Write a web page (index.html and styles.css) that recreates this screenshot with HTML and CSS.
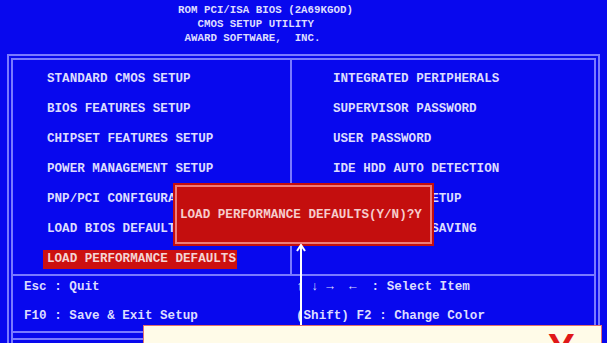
FILE: index.html
```html
<!DOCTYPE html>
<html lang="en">
  <head>
    <meta charset="UTF-8" />
    <title>CMOS Setup Utility</title>
    <link rel="stylesheet" href="styles.css">
  </head>
  <body>
    <pre class="bios-header">ROM PCI/ISA BIOS (2A69KGOD)
   CMOS SETUP UTILITY
 AWARD SOFTWARE,  INC.</pre>

    <div class="setup-box">
      <div class="menu">
        <ul class="menu-col menu-left">
          <li>STANDARD CMOS SETUP</li>
          <li>BIOS FEATURES SETUP</li>
          <li>CHIPSET FEATURES SETUP</li>
          <li>POWER MANAGEMENT SETUP</li>
          <li>PNP/PCI CONFIGURATION</li>
          <li>LOAD BIOS DEFAULTS</li>
          <li><span class="selected">LOAD PERFORMANCE DEFAULTS</span></li>
        </ul>
        <ul class="menu-col menu-right">
          <li>INTEGRATED PERIPHERALS</li>
          <li>SUPERVISOR PASSWORD</li>
          <li>USER PASSWORD</li>
          <li>IDE HDD AUTO DETECTION</li>
          <li>SAVE &amp; EXIT SETUP</li>
          <li>EXIT WITHOUT SAVING</li>
        </ul>
      </div>
      <div class="help">
        <div class="help-col help-left">
          <p>Esc : Quit</p>
          <p>F10 : Save &amp; Exit Setup</p>
        </div>
        <div class="help-col help-right">
          <p>↑ ↓ →  ←  : Select Item</p>
          <p>(Shift) F2 : Change Color</p>
        </div>
      </div>
      <div class="status"></div>
    </div>

    <div class="dialog">
      <div class="dialog-inner">LOAD PERFORMANCE DEFAULTS(Y/N)?Y</div>
    </div>

    <svg class="pointer" width="12" height="82" viewBox="0 0 12 82">
      <path d="M6 1 L6 81" stroke="#ffffff" stroke-width="2" />
      <path d="M2 7 L6 1 L10 7" stroke="#ffffff" stroke-width="2" fill="none" />
    </svg>

    <div class="callout">
      <span class="callout-key">Y</span>
    </div>
  </body>
</html>
```

FILE: styles.css
```css
body {
  margin: 0;
  height: 343px;
  overflow: hidden;
  background: #0808ee;
  color: #dcdcff;
  font-family: 'Liberation Mono', 'DejaVu Sans Mono', monospace;
  font-weight: bold;
  position: relative;
}

ul,
p {
  margin: 0;
  padding: 0;
  list-style: none;
}

.bios-header {
  margin: 0;
  padding: 3px 0 0 178px;
  font-family: inherit;
  font-size: 10.8px;
  line-height: 14px;
}

.setup-box {
  margin: 9px 0 0 7px;
  width: 581px;
  height: 320px;
  border: 6px double #7a7aff;
  font-size: 12.6px;
}

.menu {
  display: grid;
  grid-template-columns: 279px 1fr;
  border-bottom: 2px solid #7a7aff;
}

.menu-col {
  padding-top: 4px;
  height: 210px;
}

.menu-col li {
  line-height: 30px;
  white-space: pre;
}

.menu-left {
  padding-left: 34px;
  border-right: 2px solid #7a7aff;
}

.menu-right {
  padding-left: 41px;
}

.selected {
  background: #cc1010;
  color: #f4d4d4;
  padding: 2px 1px 3px 4px;
  margin-left: -4px;
}

.help {
  display: grid;
  grid-template-columns: 283px 1fr;
  padding: 1px 0 5px;
  border-bottom: 2px solid #7a7aff;
}

.help-col {
  display: flex;
  flex-direction: column;
  gap: 9px;
}

.help-col p {
  line-height: 20px;
  white-space: pre;
}

.help-left {
  padding-left: 11px;
}

.status {
  margin-top: 5px;
  border-top: 2px solid #7a7aff;
  height: 20px;
}

.dialog {
  position: absolute;
  left: 173px;
  top: 183px;
  width: 257px;
  height: 59px;
  padding: 2px;
  background: #c40e0e;
}

.dialog-inner {
  height: 100%;
  box-sizing: border-box;
  border: 2px solid #ee7a7a;
  padding-left: 3px;
  display: flex;
  align-items: center;
  font-size: 12.6px;
  color: #f6cccc;
  white-space: pre;
}

.pointer {
  position: absolute;
  left: 295px;
  top: 244px;
}

.callout {
  position: absolute;
  left: 143px;
  top: 325px;
  width: 457px;
  height: 40px;
  background: #fffbe8;
  border: 1px solid #e07070;
}

.callout-key {
  position: absolute;
  left: 404px;
  top: 2px;
  font-family: 'Liberation Sans', Arial, sans-serif;
  font-size: 40px;
  line-height: 40px;
  color: #e01818;
}
```
